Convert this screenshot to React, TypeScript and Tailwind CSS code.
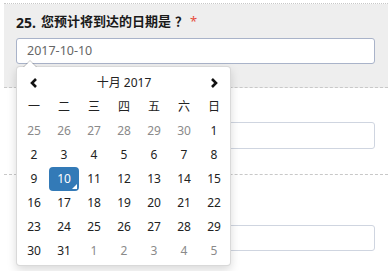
import React from "react";

const weekdays = ["一", "二", "三", "四", "五", "六", "日"];

// 2017-10, weeks start on Monday
const weeks: { d: number; muted?: boolean }[][] = [
  [25, 26, 27, 28, 29, 30].map((d) => ({ d, muted: true })).concat([{ d: 1 }]),
  [2, 3, 4, 5, 6, 7, 8].map((d) => ({ d })),
  [9, 10, 11, 12, 13, 14, 15].map((d) => ({ d })),
  [16, 17, 18, 19, 20, 21, 22].map((d) => ({ d })),
  [23, 24, 25, 26, 27, 28, 29].map((d) => ({ d })),
  [{ d: 30 }, { d: 31 }].concat([1, 2, 3, 4, 5].map((d) => ({ d, muted: true }))),
];

function Chevron({ dir }: { dir: "left" | "right" }) {
  return (
    <svg width="8" height="10" viewBox="0 0 8 10">
      <path
        d={dir === "left" ? "M6 1 L2 5 L6 9" : "M2 1 L6 5 L2 9"}
        fill="none"
        stroke="#111"
        strokeWidth={2.6}
      />
    </svg>
  );
}

function DatePicker() {
  return (
    <div className="absolute left-[16px] top-[66px] w-[215px] rounded-[4px] border border-black/15 bg-white px-[2px] pt-[4px] pb-[2px] shadow-[0_4px_10px_rgba(0,0,0,0.15)]">
      <div className="absolute left-[6px] -top-[7px] h-0 w-0 border-x-[7px] border-b-[7px] border-x-transparent border-b-black/20" />
      <div className="absolute left-[7px] -top-[6px] h-0 w-0 border-x-[6px] border-b-[6px] border-x-transparent border-b-white" />

      <div className="grid h-6 w-[210px] grid-cols-7 items-center text-[12px] text-[#222]">
        <div className="flex justify-center">
          <Chevron dir="left" />
        </div>
        <div className="col-span-5 text-center">十月 2017</div>
        <div className="flex justify-center">
          <Chevron dir="right" />
        </div>
      </div>

      <div className="grid h-6 w-[210px] grid-cols-7 items-center text-[12px] text-[#222]">
        {weekdays.map((w) => (
          <div key={w} className="text-center">
            {w}
          </div>
        ))}
      </div>

      {weeks.map((week, i) => (
        <div key={i} className="grid h-6 w-[210px] grid-cols-7 text-[12px]">
          {week.map((c, j) =>
            i === 2 && c.d === 10 ? (
              <div
                key={j}
                className="relative flex items-center justify-center rounded-[4px] bg-[#337ab7] text-white"
              >
                {c.d}
                <span className="absolute right-[2px] bottom-[2px] h-0 w-0 border-l-[5px] border-b-[5px] border-l-transparent border-b-white" />
              </div>
            ) : (
              <div
                key={j}
                className={
                  "flex items-center justify-center " +
                  (c.muted ? "text-[#8a8a8a]" : "text-[#222]")
                }
              >
                {c.d}
              </div>
            )
          )}
        </div>
      ))}
    </div>
  );
}

export default function App() {
  return (
    <div
      className="relative h-[271px] w-[388px] overflow-hidden bg-white pt-[3px]"
      style={{ fontFamily: '"Noto Sans", "Noto Sans CJK SC", sans-serif' }}
    >
      <div className="ml-[4px] border-t border-dotted border-[#c8c8c8]" />

      <div className="ml-[4px] border-b border-dashed border-[#c8c8c8] bg-[#eeeeee] pl-3 pr-[13px] pt-[8px] pb-[23px]">
        <div className="flex h-5 items-center font-bold text-[#1a1a1a]">
          <span className="text-[14px]">25.</span>
          <span className="ml-[5px] text-[13px]">您预计将到达的日期是</span>
          <span className="ml-[4px] text-[13px]">？</span>
          <span className="ml-[2px] text-[13px] font-normal text-[#e74c3c]">*</span>
        </div>
        <div className="mt-[6px] flex h-[26px] items-center rounded-[3px] border border-[#a9b3c9] bg-white px-[10px] text-[12.5px] text-[#666]">
          2017-10-10
        </div>
      </div>

      <div className="ml-[4px] border-b border-dashed border-[#c8c8c8] pl-3 pr-[13px] pt-[34px] pb-[25px]">
        <div className="h-[27px] rounded-[3px] border border-[#cfd5e0] bg-white" />
      </div>

      <div className="ml-[4px] pl-3 pr-[13px] pt-[50px]">
        <div className="h-[26px] rounded-[3px] border border-[#cfd5e0] bg-white" />
      </div>

      <DatePicker />
    </div>
  );
}
